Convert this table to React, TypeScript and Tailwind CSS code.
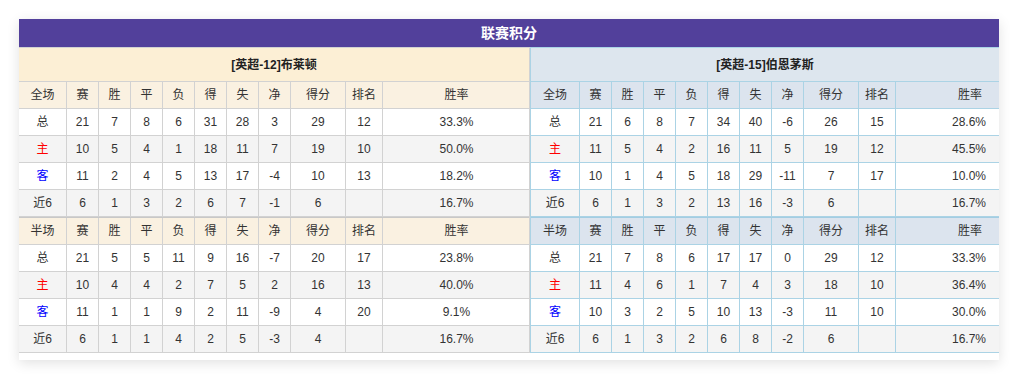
import React from 'react';

type Row = (string | number)[];

const leftFull: Row[] = [
  ['总', 21, 7, 8, 6, 31, 28, 3, 29, 12, '33.3%'],
  ['主', 10, 5, 4, 1, 18, 11, 7, 19, 10, '50.0%'],
  ['客', 11, 2, 4, 5, 13, 17, -4, 10, 13, '18.2%'],
  ['近6', 6, 1, 3, 2, 6, 7, -1, 6, '', '16.7%'],
];
const leftHalf: Row[] = [
  ['总', 21, 5, 5, 11, 9, 16, -7, 20, 17, '23.8%'],
  ['主', 10, 4, 4, 2, 7, 5, 2, 16, 13, '40.0%'],
  ['客', 11, 1, 1, 9, 2, 11, -9, 4, 20, '9.1%'],
  ['近6', 6, 1, 1, 4, 2, 5, -3, 4, '', '16.7%'],
];
const rightFull: Row[] = [
  ['总', 21, 6, 8, 7, 34, 40, -6, 26, 15, '28.6%'],
  ['主', 11, 5, 4, 2, 16, 11, 5, 19, 12, '45.5%'],
  ['客', 10, 1, 4, 5, 18, 29, -11, 7, 17, '10.0%'],
  ['近6', 6, 1, 3, 2, 13, 16, -3, 6, '', '16.7%'],
];
const rightHalf: Row[] = [
  ['总', 21, 7, 8, 6, 17, 17, 0, 29, 12, '33.3%'],
  ['主', 11, 4, 6, 1, 7, 4, 3, 18, 10, '36.4%'],
  ['客', 10, 3, 2, 5, 10, 13, -3, 11, 10, '30.0%'],
  ['近6', 6, 1, 3, 2, 6, 8, -2, 6, '', '16.7%'],
];

const heads = ['赛', '胜', '平', '负', '得', '失', '净', '得分', '排名', '胜率'];

type Theme = {
  widths: number[];
  border: string;
  thick: string;
  teamBg: string;
  headBg: string;
  rateAlign: 'center' | 'right';
};

const leftTheme: Theme = {
  widths: [48, 32, 32, 32, 32, 32, 32, 32, 55, 37, 147],
  border: 'border-[#d2d2d2]',
  thick: 'border-t-[#c8c8c8]',
  teamBg: 'bg-[#fcefd5]',
  headBg: 'bg-[#faf1e1]',
  rateAlign: 'center',
};

const rightTheme: Theme = {
  widths: [49, 32, 32, 32, 32, 32, 32, 32, 55, 37, 103],
  border: 'border-[#abd3e5]',
  thick: 'border-t-[#a3cde2]',
  teamBg: 'bg-[#dde6ee]',
  headBg: 'bg-[#dce4ee]',
  rateAlign: 'right',
};

function labelColor(v: string | number) {
  if (v === '主') return 'text-[#ff0000]';
  if (v === '客') return 'text-[#0000ff]';
  return '';
}

function Cells({ values, theme, header }: { values: (string | number)[]; theme: Theme; header?: boolean }) {
  return (
    <>
      {values.map((v, i) => {
        const last = i === values.length - 1;
        const right = last && theme.rateAlign === 'right';
        return (
          <div
            key={i}
            style={{ width: theme.widths[i] }}
            className={`flex h-full shrink-0 items-center ${right ? (header ? 'justify-end pr-[17px]' : 'justify-end pr-[13px]') : 'justify-center'} ${last ? '' : `border-r ${theme.border}`} ${i === 0 ? labelColor(v) : ''}`}
          >
            {v}
          </div>
        );
      })}
    </>
  );
}

function Side({ team, full, half, theme, className }: { team: string; full: Row[]; half: Row[]; theme: Theme; className: string }) {
  return (
    <div className={className}>
      <div className={`flex h-[35px] items-center justify-center border-y font-bold text-[#222] ${theme.border} ${theme.teamBg}`}>
        {team}
      </div>
      <div className={`flex h-[27px] border-b ${theme.border} ${theme.headBg}`}>
        <Cells values={['全场', ...heads]} theme={theme} header />
      </div>
      {full.map((r, i) => (
        <div key={i} className={`flex h-[27px] border-b ${theme.border} ${i % 2 ? 'bg-[#f4f4f4]' : 'bg-white'}`}>
          <Cells values={r} theme={theme} />
        </div>
      ))}
      <div className={`flex h-[28px] border-y ${theme.border} ${theme.thick} ${theme.headBg}`}>
        <Cells values={['半场', ...heads]} theme={theme} header />
      </div>
      {half.map((r, i) => (
        <div key={i} className={`flex h-[27px] border-b ${theme.border} ${i % 2 ? 'bg-[#f4f4f4]' : 'bg-white'}`}>
          <Cells values={r} theme={theme} />
        </div>
      ))}
    </div>
  );
}

export default function App() {
  return (
    <div className="min-h-[380px] bg-white p-[19px] font-['Tahoma','Liberation_Sans','Noto_Sans_CJK_SC',sans-serif] text-[12px] text-[#333]">
      <div className="w-[980px] bg-white pb-[7px] shadow-[0_3px_12px_rgba(0,0,0,0.12)]">
        <div className="flex h-[28px] items-center justify-center bg-[#52409b] text-[14px] font-bold text-white">
          联赛积分
        </div>
        <div className="flex">
          <Side team="[英超-12]布莱顿" full={leftFull} half={leftHalf} theme={leftTheme} className="w-[511px] border-r border-[#d2d2d2]" />
          <Side team="[英超-15]伯恩茅斯" full={rightFull} half={rightHalf} theme={rightTheme} className="w-[469px] border-l border-[#abd3e5]" />
        </div>
      </div>
    </div>
  );
}
